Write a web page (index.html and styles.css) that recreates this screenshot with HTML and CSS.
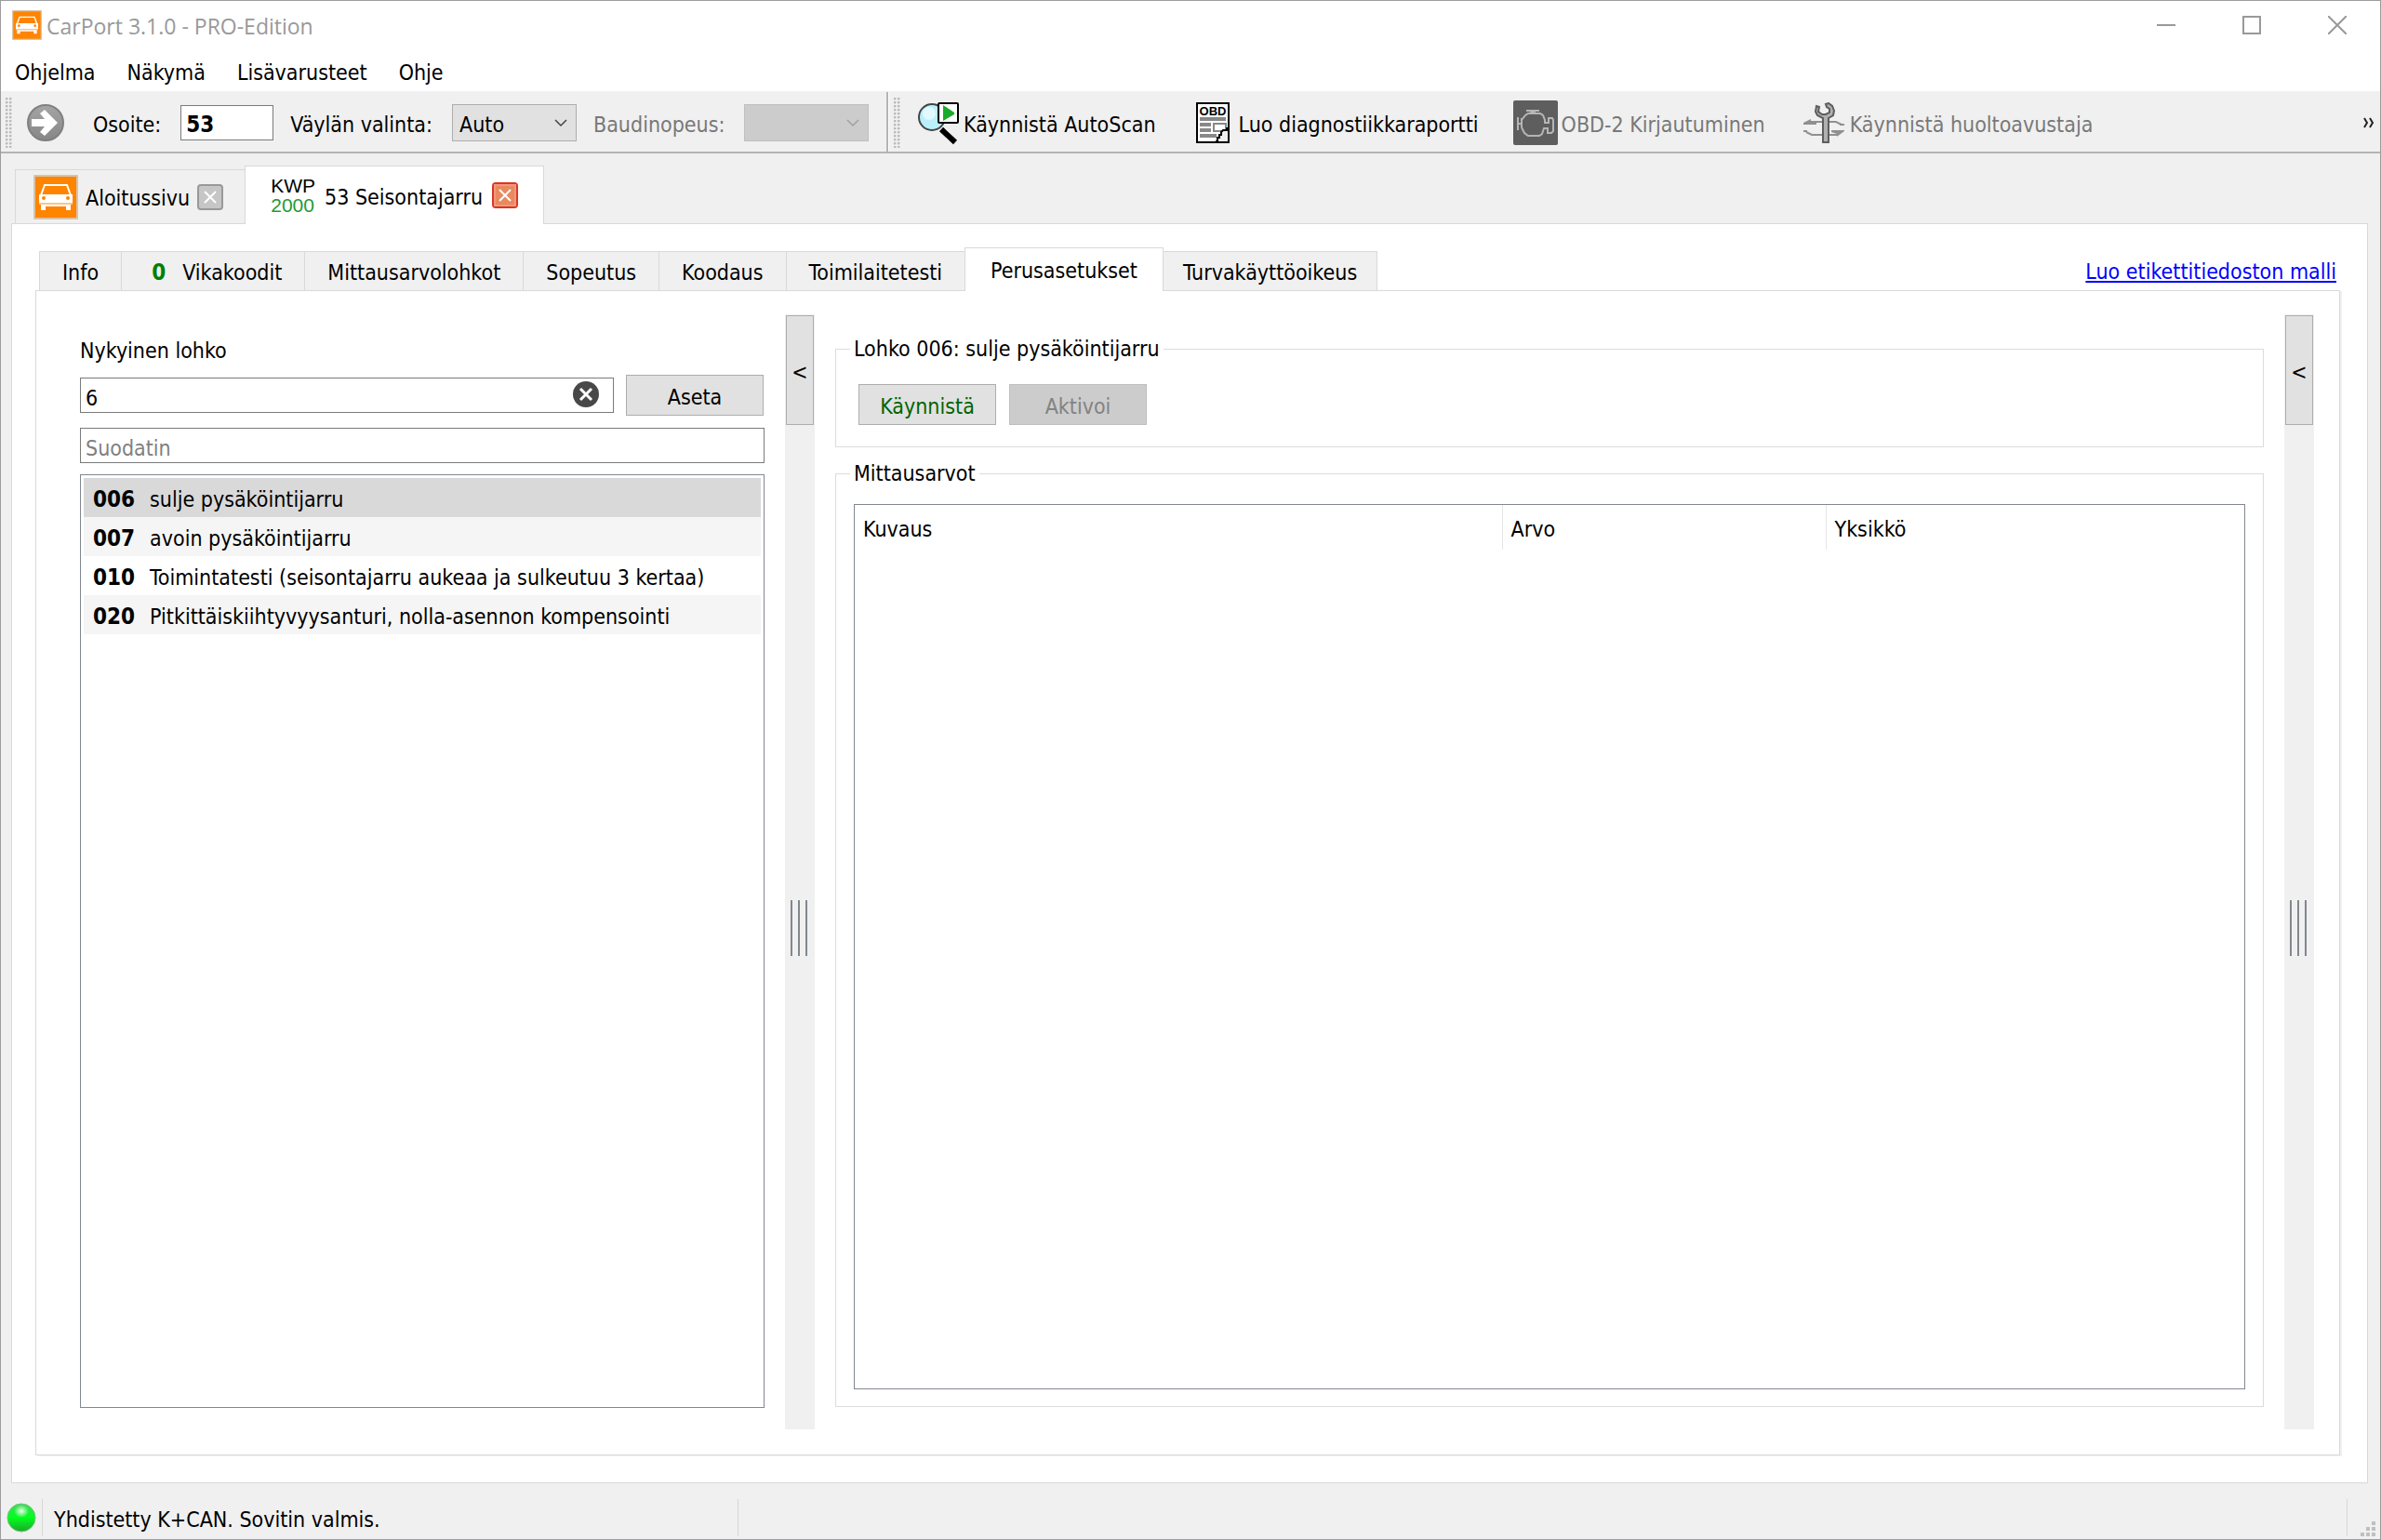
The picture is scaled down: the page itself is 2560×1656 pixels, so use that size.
FILE: index.html
```
<!DOCTYPE html>
<html lang="fi">
<head>
    <meta charset="UTF-8">
    <title>CarPort 3.1.0 - PRO-Edition</title>
    <link rel="stylesheet" href="styles.css">
</head>
<body>
    <svg class="defs" width="0" height="0">
        <symbol id="car" viewBox="0 0 48 48">
            <rect width="48" height="48" rx="1" fill="#d8c3a8"/>
            <rect x="2" y="2" width="44" height="44" fill="#ff8400"/>
            <path d="M12 11h24l4 11H8z" fill="none" stroke="#fff" stroke-width="2"/>
            <path d="M6 21h36v9H6z" fill="#fff"/>
            <path d="M6 30h36v2H6z" fill="#ffc48a"/>
            <path d="M8 32h32v2H8zM8 32h5v6H8zM35 32h5v6h-5z" fill="#fff"/>
            <circle cx="11" cy="25" r="2" fill="#ff8400"/>
            <circle cx="37" cy="25" r="2" fill="#ff8400"/>
        </symbol>
    </svg>

    <div class="window">
        <!-- Title bar -->
        <header class="titlebar">
            <svg class="app-icon" width="32" height="32"><use href="#car"/></svg>
            <span class="title">CarPort 3.1.0 - PRO-Edition</span>
            <div class="window-buttons">
                <button type="button" aria-label="Pienennä"><svg width="20" height="20"><path d="M0 10h20" stroke="#999" stroke-width="2"/></svg></button>
                <button type="button" aria-label="Suurenna"><svg width="20" height="20"><rect x="1" y="1" width="18" height="18" fill="none" stroke="#999" stroke-width="2"/></svg></button>
                <button type="button" aria-label="Sulje"><svg width="20" height="20"><path d="M0 0l20 20M20 0L0 20" stroke="#999" stroke-width="2"/></svg></button>
            </div>
        </header>

        <!-- Menu -->
        <nav class="menubar">
            <button type="button">Ohjelma</button>
            <button type="button">Näkymä</button>
            <button type="button">Lisävarusteet</button>
            <button type="button">Ohje</button>
        </nav>

        <!-- Toolbars -->
        <div class="toolbars">
            <div class="toolbar toolbar-address">
                <span class="grip"></span>
                <button type="button" class="go" aria-label="Avaa">
                    <svg width="42" height="42" viewBox="0 0 42 42">
                        <defs><linearGradient id="go" x1="0" y1="0" x2="0" y2="1"><stop offset="0" stop-color="#a5a5a5"/><stop offset="1" stop-color="#868686"/></linearGradient></defs>
                        <circle cx="21" cy="21" r="19" fill="url(#go)" stroke="#808080" stroke-width="2"/>
                        <path d="M6 17h14l-5-6 5-4 14 14-14 14-5-4 5-6H6z" fill="#fff"/>
                    </svg>
                </button>
                <label for="address">Osoite:</label>
                <input type="text" id="address" class="address" value="53">
                <label for="bus">Väylän valinta:</label>
                <div class="select">
                    <select id="bus"><option>Auto</option></select>
                    <svg width="14" height="9"><path d="M1 1l6 6 6-6" fill="none" stroke="#444" stroke-width="1.5"/></svg>
                </div>
                <label for="baud" class="off">Baudinopeus:</label>
                <div class="select">
                    <select id="baud" disabled><option></option></select>
                    <svg width="14" height="9"><path d="M1 1l6 6 6-6" fill="none" stroke="#a0a0a0" stroke-width="1.5"/></svg>
                </div>
            </div>

            <div class="toolbar toolbar-actions">
                <span class="grip"></span>
                <button type="button" class="tool tool-scan">
                    <svg width="48" height="48" viewBox="0 0 48 48">
                        <path d="M27 31l15 14" stroke="#000" stroke-width="6"/>
                        <circle cx="17" cy="18" r="14" fill="#b9f0fa" stroke="#444" stroke-width="2"/>
                        <circle cx="14" cy="14" r="7" fill="#e2f9fd"/>
                        <rect x="24" y="3" width="21" height="21" rx="1" fill="#fff" stroke="#000" stroke-width="2"/>
                        <path d="M29 5l12 8v2l-12 7z" fill="#1aab2b"/>
                    </svg>
                    <span>Käynnistä AutoScan</span>
                </button>
                <button type="button" class="tool tool-report">
                    <svg width="36" height="44" viewBox="0 0 36 44">
                        <rect x="1" y="1" width="34" height="42" fill="#fff" stroke="#000" stroke-width="2"/>
                        <text x="18" y="14" class="icon-obd">OBD</text>
                        <path d="M4 18h28M4 24h12M4 30h12M4 36h18" stroke="#888" stroke-width="4"/>
                        <rect x="19" y="23" width="13" height="8" fill="#fff" stroke="#888" stroke-width="2"/>
                        <path d="M34 29h-4l-2 2v3h-2v3h-2v4h-2v1h12z" fill="#eee"/>
                        <path d="M35 28h-2v2h-4l-2 2v3h-2v3h-2v4h-2" fill="none" stroke="#000" stroke-width="2"/>
                    </svg>
                    <span>Luo diagnostiikkaraportti</span>
                </button>
                <button type="button" class="tool tool-login" disabled>
                    <svg width="48" height="48" viewBox="0 0 48 48">
                        <rect width="48" height="48" rx="2" fill="#5e5e5e"/>
                        <g fill="none" stroke="#b5b5b5" stroke-width="2">
                            <path d="M5 18v14M5 25h4M9 19v10M9 21l4-5 3-2h13l3 2 2 5v3h4v-5h4l1 2v12l-2 2h-4v-5h-4l-2 6-3 2H16l-4-3-3-6"/>
                            <path d="M14 11h14M18 13h6"/>
                        </g>
                    </svg>
                    <span>OBD-2 Kirjautuminen</span>
                </button>
                <button type="button" class="tool tool-service" disabled>
                    <svg width="44" height="44" viewBox="0 0 44 44">
                        <path d="M9 21h26l6 3M3 32l6 3h27" fill="none" stroke="#909090" stroke-width="2"/>
                        <path d="M0 22l8-4v2h6v4H0zM44 31l-8 6v-3l-6-2v-2h14zM0 30h4v2H0zM39 23h5v2h-5z" fill="#909090"/>
                        <path d="M14 4l-1 6 2 4 6 3v26h6V17l5-3 1-5-2-5-4-3-3 1 1 3 3 2v4l-4 2h-4l-4-3 1-5z" fill="#b0b0b0" stroke="#5e5e5e" stroke-width="2"/>
                    </svg>
                    <span>Käynnistä huoltoavustaja</span>
                </button>
                <button type="button" class="overflow" aria-label="Lisää">
                    <svg width="12" height="12"><path d="M1 1l3 5-3 5M7 1l3 5-3 5" fill="none" stroke="#222" stroke-width="2"/></svg>
                </button>
            </div>
        </div>

        <!-- Open modules -->
        <div class="module-tabs">
            <div class="module-tab">
                <svg width="48" height="48"><use href="#car"/></svg>
                <span class="module-name">Aloitussivu</span>
                <button type="button" class="close" aria-label="Sulje välilehti">
                    <svg width="28" height="28"><rect x="1" y="1" width="26" height="26" rx="3" fill="#c6c6c6" stroke="#999" stroke-width="2"/><path d="M8 8l12 12M20 8L8 20" stroke="#fff" stroke-width="2"/></svg>
                </button>
            </div>
            <div class="module-tab active">
                <span class="kwp">KWP<b>2000</b></span>
                <span class="module-name">53 Seisontajarru</span>
                <button type="button" class="close" aria-label="Sulje välilehti">
                    <svg width="28" height="28"><rect x="1" y="1" width="26" height="26" rx="3" fill="#e9895e" stroke="#dc3522" stroke-width="2"/><rect x="3" y="3" width="22" height="22" fill="none" stroke="#f09a80" stroke-width="2"/><path d="M8 8l12 12M20 8L8 20" stroke="#fff" stroke-width="2"/></svg>
                </button>
            </div>
        </div>

        <main class="module">
            <div class="function-bar">
                <div class="function-tabs">
                    <button type="button">Info</button>
                    <button type="button" class="faults"><b>0</b>Vikakoodit</button>
                    <button type="button">Mittausarvolohkot</button>
                    <button type="button">Sopeutus</button>
                    <button type="button">Koodaus</button>
                    <button type="button">Toimilaitetesti</button>
                    <button type="button" class="active">Perusasetukset</button>
                    <button type="button">Turvakäyttöoikeus</button>
                </div>
                <a href="#" class="label-link">Luo etikettitiedoston malli</a>
            </div>

            <div class="function-pane">
                <section class="blocks">
                    <label for="block">Nykyinen lohko</label>
                    <div class="block-row">
                        <div class="block-input">
                            <input type="text" id="block" value="6">
                            <button type="button" class="clear" aria-label="Tyhjennä">
                                <svg width="28" height="28"><circle cx="14" cy="14" r="14" fill="#484848"/><path d="M8 8l12 12M20 8L8 20" stroke="#fff" stroke-width="3"/></svg>
                            </button>
                        </div>
                        <button type="button" class="button">Aseta</button>
                    </div>
                    <input type="text" class="filter" placeholder="Suodatin" aria-label="Suodatin">
                    <ul class="block-list">
                        <li class="selected"><b>006</b>sulje pysäköintijarru</li>
                        <li><b>007</b>avoin pysäköintijarru</li>
                        <li><b>010</b>Toimintatesti (seisontajarru aukeaa ja sulkeutuu 3 kertaa)</li>
                        <li><b>020</b>Pitkittäiskiihtyvyysanturi, nolla-asennon kompensointi</li>
                    </ul>
                </section>

                <div class="splitter">
                    <button type="button">&lt;</button>
                    <span class="handle"></span>
                </div>

                <section class="details">
                    <fieldset class="block-group">
                        <legend>Lohko 006: sulje pysäköintijarru</legend>
                        <button type="button" class="button start">Käynnistä</button>
                        <button type="button" class="button" disabled>Aktivoi</button>
                    </fieldset>
                    <fieldset class="values-group">
                        <legend>Mittausarvot</legend>
                        <div class="values">
                            <table>
                                <thead>
                                    <tr>
                                        <th class="col-name">Kuvaus</th>
                                        <th class="col-value">Arvo</th>
                                        <th>Yksikkö</th>
                                    </tr>
                                </thead>
                            </table>
                        </div>
                    </fieldset>
                </section>

                <div class="splitter">
                    <button type="button">&lt;</button>
                    <span class="handle"></span>
                </div>
            </div>
        </main>

        <!-- Status bar -->
        <footer class="statusbar">
            <svg width="32" height="32" viewBox="0 0 32 32">
                <defs>
                    <linearGradient id="led" x1="0" y1="0" x2="0" y2="1"><stop offset="0" stop-color="#3fd95a"/><stop offset=".5" stop-color="#00ff1e"/><stop offset="1" stop-color="#1fa52e"/></linearGradient>
                    <radialGradient id="shine"><stop offset="0" stop-color="#fff" stop-opacity=".9"/><stop offset="1" stop-color="#fff" stop-opacity="0"/></radialGradient>
                </defs>
                <circle cx="16" cy="16" r="15" fill="url(#led)" stroke="#6fc47a"/>
                <ellipse cx="16" cy="9" rx="8" ry="7" fill="url(#shine)"/>
            </svg>
            <span class="status-text">Yhdistetty K+CAN. Sovitin valmis.</span>
            <span class="status-rest"></span>
            <svg class="size-grip" width="16" height="16"><path d="M12 0h4v4h-4zM6 6h4v4H6zM12 6h4v4h-4zM0 12h4v4H0zM6 12h4v4H6zM12 12h4v4h-4z" fill="#bfbfbf"/></svg>
        </footer>
    </div>
</body>
</html>
```

FILE: styles.css
```
* {
    box-sizing: border-box;
}

body {
    margin: 0;
    background: #f0f0f0;
    color: #000;
    font-family: "DejaVu Sans Condensed", "Open Sans", sans-serif;
    font-size: 23px;
    line-height: 32px;
}

button, input, select {
    margin: 0;
    padding: 0;
    border: 0;
    border-radius: 0;
    background: none;
    color: inherit;
    font: inherit;
}

svg {
    display: block;
    flex: none;
}

.defs {
    position: absolute;
}

.window {
    display: flex;
    flex-direction: column;
    min-height: 100vh;
    border: 1px solid #9c9c9f;
}

/* Title bar */
.titlebar {
    display: flex;
    align-items: center;
    height: 52px;
    padding-left: 12px;
    background: #fff;
}

.title {
    flex: 1;
    margin-left: 5px;
    padding-top: 2px;
    color: #999;
    font-family: "Open Sans", sans-serif;
}

.window-buttons {
    display: flex;
}

.window-buttons button {
    display: flex;
    justify-content: center;
    align-items: center;
    width: 92px;
    height: 52px;
}

/* Menu */
.menubar {
    display: flex;
    gap: 34px;
    height: 46px;
    padding: 9px 15px 0;
    background: #fff;
    border-bottom: 1px solid #f0f0f0;
}

.menubar button {
    height: 32px;
}

/* Toolbars */
.toolbars {
    display: flex;
    height: 66px;
    border-bottom: 2px solid #b4b4b4;
}

.toolbar {
    display: flex;
    align-items: center;
    padding: 2px 0 0 5px;
    white-space: nowrap;
}

.toolbar label, .tool span {
    padding-top: 3px;
}

.toolbar-address {
    width: 954px;
    border-right: 2px solid #b4b4b4;
}

.toolbar-actions {
    flex: 1;
    border-left: 1px solid #fff;
}

.grip {
    width: 7px;
    height: 54px;
    background: radial-gradient(circle at 1px 1px, #bbb 1px, transparent 2px) 0 0 / 4px 4px;
}

.go {
    margin: 0 30px 0 15px;
}

.off {
    color: #787878;
}

.address {
    width: 100px;
    height: 38px;
    margin: 0 18px 0 21px;
    padding: 3px 5px 0;
    border: 1px solid #7a7a7a;
    background: #fff;
    font-size: 24px;
    font-weight: bold;
}

.select {
    position: relative;
    margin: 0 18px 0 21px;
}

.select select {
    display: block;
    width: 134px;
    height: 40px;
    padding: 3px 7px 0;
    border: 1px solid #adadad;
    background: #e1e1e1;
    appearance: none;
}

.select select:disabled {
    border-color: #bfbfbf;
    background: #ccc;
    opacity: 1;
}

.select svg {
    position: absolute;
    top: 16px;
    right: 10px;
}

.tool {
    display: flex;
    align-items: center;
}

.tool:disabled {
    color: #787878;
}

.tool-scan {
    gap: 3px;
    margin-left: 17px;
}

.tool-report {
    gap: 10px;
    margin-left: 43px;
}

.tool-login {
    gap: 4px;
    margin-left: 37px;
}

.tool-service {
    gap: 6px;
    margin-left: 41px;
}

.icon-obd {
    font-family: "Liberation Sans", sans-serif;
    font-size: 13px;
    font-weight: bold;
    text-anchor: middle;
}

.overflow {
    margin: 0 6px 0 auto;
}

/* Open modules */
.module-tabs {
    display: flex;
    align-items: flex-end;
    height: 75px;
    padding-left: 15px;
}

.module-tab {
    display: flex;
    align-items: center;
    gap: 8px;
    height: 58px;
    padding: 0 23px 0 19px;
    border: 1px solid #d9d9d9;
    border-bottom: 0;
    border-right: 0;
}

.module-tab.active {
    z-index: 1;
    gap: 10px;
    height: 63px;
    margin-bottom: -1px;
    padding: 0 27px;
    border-right: 1px solid #d9d9d9;
    background: #fff;
}

.module-name {
    padding-top: 3px;
}

.kwp {
    font-family: "Liberation Sans", sans-serif;
    font-size: 21px;
    line-height: 21px;
}

.kwp b {
    display: block;
    color: #1f9a34;
    font-weight: normal;
}

/* Module page */
.module {
    display: flex;
    flex: 1;
    flex-direction: column;
    margin: 0 13px 0 11px;
    padding: 25px 29px 29px 25px;
    border: 1px solid #d9d9d9;
    background: #fff;
}

.function-bar {
    display: flex;
    justify-content: space-between;
}

.function-tabs {
    display: flex;
    align-items: flex-end;
    height: 46px;
    padding-left: 4px;
}

.function-tabs button {
    height: 42px;
    padding: 3px 24px 0;
    border: 1px solid #d9d9d9;
    border-right: 0;
    border-bottom: 0;
    background: #f0f0f0;
}

.function-tabs button:last-child {
    padding: 3px 21px 0;
    border-left: 0;
    border-right: 1px solid #d9d9d9;
}

.function-tabs .faults b {
    margin: 0 18px 0 8px;
    color: #008000;
    font-size: 24px;
}

.function-tabs .active {
    z-index: 1;
    height: 47px;
    margin-bottom: -1px;
    padding: 2px 27px 0;
    border-right: 1px solid #d9d9d9;
    background: #fff;
}

.label-link {
    margin: 10px 4px 0 0;
    color: #00f;
}

.function-pane {
    display: flex;
    flex: 1;
    padding: 25px 27px 27px 47px;
    border: 1px solid #d9d9d9;
    box-shadow: 2px 1px 0 #f0f0f0;
}

/* Block list */
.blocks {
    display: flex;
    flex-direction: column;
    width: 736px;
    margin: 23px 22px 23px 0;
}

.block-row {
    display: flex;
    align-items: center;
    gap: 13px;
    margin: 10px 1px 13px 0;
}

.block-input {
    position: relative;
    flex: 1;
}

.block-input input, .filter {
    display: block;
    width: 100%;
    height: 38px;
    padding: 5px 5px 0;
    border: 1px solid #7a7a7a;
    background: #fff;
}

.filter::placeholder {
    color: #808080;
    opacity: 1;
}

.block-input .clear {
    position: absolute;
    top: 4px;
    right: 16px;
}

.button {
    width: 148px;
    height: 44px;
    padding-top: 4px;
    border: 1px solid #adadad;
    background: #e1e1e1;
}

.button:disabled {
    border-color: #bfbfbf;
    background: #ccc;
    color: #838383;
}

.start {
    color: #006400;
}

.block-list {
    flex: 1;
    margin: 12px 0 0;
    padding: 3px;
    border: 1px solid #828790;
    list-style: none;
}

.block-list li {
    height: 42px;
    padding: 7px 10px 0;
    white-space: nowrap;
}

.block-list li:nth-child(even) {
    background: #f5f5f5;
}

.block-list .selected {
    background: #d9d9d9;
}

.block-list b {
    margin-right: 16px;
    font-size: 24px;
}

/* Splitters */
.splitter {
    position: relative;
    flex: none;
    width: 32px;
    padding: 1px;
    background: #f0f0f0;
}

.splitter button {
    display: block;
    width: 30px;
    height: 118px;
    padding-top: 4px;
    border: 1px solid #adadad;
    background: #e1e1e1;
}

.handle {
    position: absolute;
    top: 630px;
    left: 6px;
    width: 18px;
    height: 60px;
    border: solid #828790;
    border-width: 0 2px;
    background: linear-gradient(#828790, #828790) center / 2px 100% no-repeat;
}

/* Block details */
.details {
    display: flex;
    flex: 1;
    flex-direction: column;
    margin: 21px 22px 24px 22px;
}

fieldset {
    display: flex;
    min-width: 0;
    margin: 0;
    border: 1px solid #dcdcdc;
}

legend {
    padding: 0 4px;
}

.block-group {
    gap: 14px;
    height: 122px;
    padding: 22px 24px 0;
}

.block-group legend {
    margin-left: -9px;
}

.values-group {
    flex: 1;
    margin-top: 12px;
    padding: 17px 19px 18px;
}

.values-group legend {
    margin-left: -4px;
}

.values {
    flex: 1;
    border: 1px solid #828790;
}

.values table {
    width: 100%;
    border-collapse: collapse;
    table-layout: fixed;
}

.values th {
    height: 48px;
    padding: 3px 9px 0;
    border-right: 1px solid #e5e5e5;
    font-weight: normal;
    text-align: left;
}

.values th:last-child {
    border-right: 0;
}

.col-name {
    width: 696px;
}

.col-value {
    width: 348px;
}

/* Status bar */
.statusbar {
    display: flex;
    align-items: center;
    height: 60px;
    padding: 13px 5px 0 6px;
}

.status-text {
    width: 749px;
    height: 40px;
    margin-left: 6px;
    padding: 6px 12px 0;
    border: solid #d7d7d7;
    border-width: 0 1px;
}

.status-rest {
    flex: 1;
    height: 40px;
    margin-right: 14px;
    border-right: 1px solid #d7d7d7;
}

.size-grip {
    align-self: flex-end;
    margin-bottom: 3px;
}
```
